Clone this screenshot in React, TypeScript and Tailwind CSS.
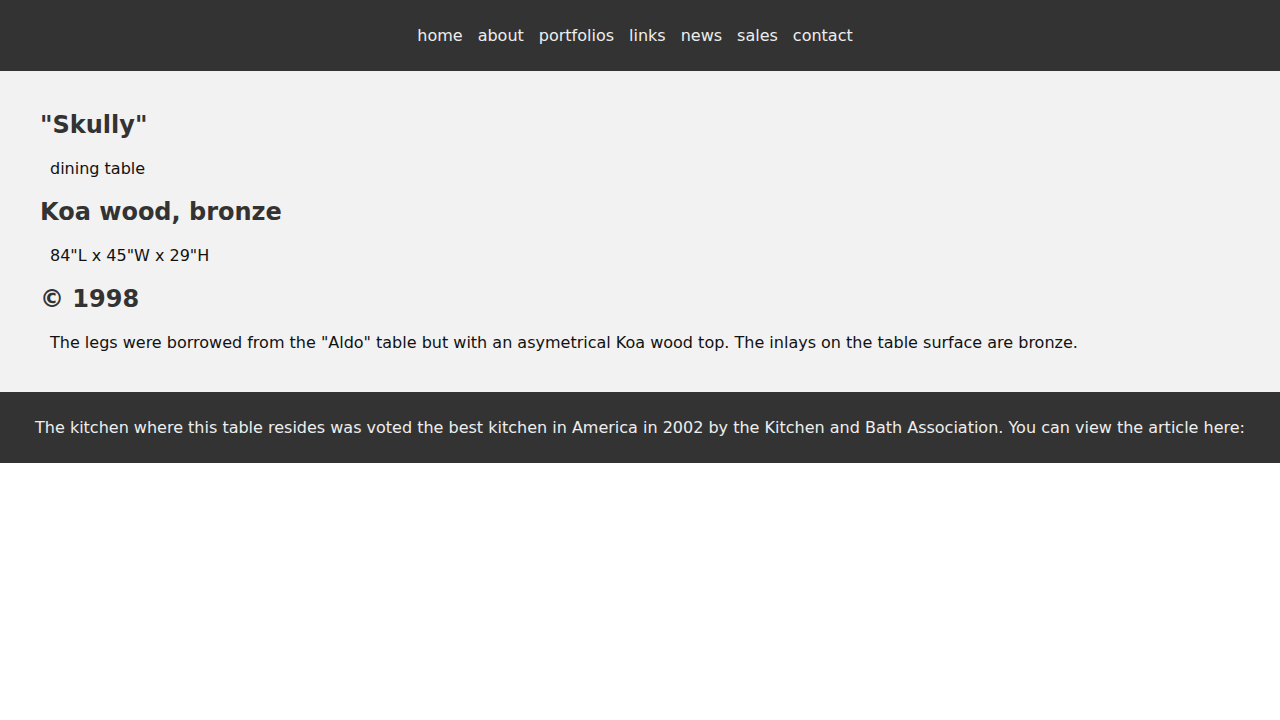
const links = ["home", "about", "portfolios", "links", "news", "sales", "contact"]

export default function App() {
  return (
    <div className="font-['DejaVu_Sans',sans-serif] bg-white">
      <header className="bg-[#333333] h-[71px] flex items-center justify-center">
        <nav className="flex gap-[15px] pr-[10px]">
          {links.map((l) => (
            <a key={l} href="#" className="text-[#eeeeee] text-base leading-[19px]">
              {l}
            </a>
          ))}
        </nav>
      </header>
      <main className="bg-[#f2f2f2] px-10 pt-[40px] pb-[40px] flex flex-col gap-5">
        <h2 className="text-2xl leading-[28px] font-bold text-[#333333]">"Skully"</h2>
        <p className="pl-[10px] text-base leading-[19px] text-[#111111]">dining table</p>
        <h2 className="text-2xl leading-[28px] font-bold text-[#333333]">Koa wood, bronze</h2>
        <p className="pl-[10px] text-base leading-[19px] text-[#111111]">84"L x 45"W x 29"H</p>
        <h2 className="text-2xl leading-[28px] font-bold text-[#333333]">© 1998</h2>
        <p className="pl-[10px] text-base leading-[19px] text-[#111111]">
          The legs were borrowed from the "Aldo" table but with an asymetrical Koa wood top. The inlays on the table surface are bronze.
        </p>
      </main>
      <footer className="bg-[#333333] py-[26px] text-center">
        <p className="text-[#eeeeee] text-base leading-[19px]">
          The kitchen where this table resides was voted the best kitchen in America in 2002 by the Kitchen and Bath Association. You can view the article here:
        </p>
      </footer>
    </div>
  )
}
